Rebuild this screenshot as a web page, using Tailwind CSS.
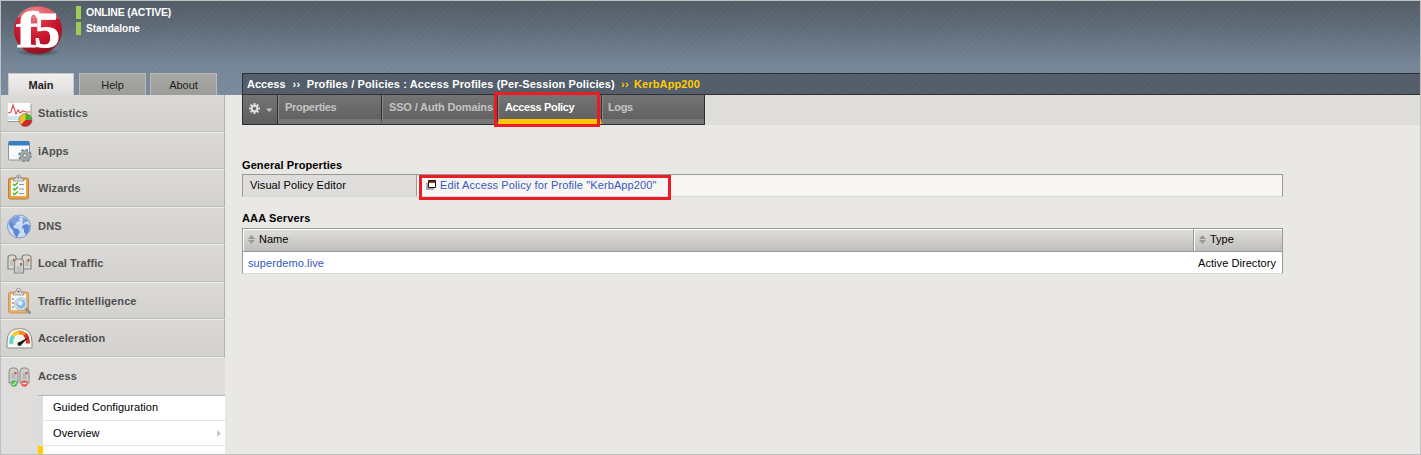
<!DOCTYPE html>
<html lang="en">
<head>
<meta charset="utf-8">
<title>Access Profiles</title>
<script src="https://cdn.jsdelivr.net/npm/@tailwindcss/browser@4"></script>
</head>
<body class="w-[1421px] h-[455px] overflow-hidden bg-[#e9e8e4] font-['Liberation_Sans',Arial,sans-serif] text-[11px] leading-[13px] text-black">
<div class="relative flex h-[455px] w-[1421px] flex-col border border-[#bfbfc1] overflow-hidden">
  <header class="flex h-[94px] shrink-0 bg-[repeating-linear-gradient(135deg,#ffffff06_0px,#ffffff06_2px,transparent_2px,transparent_4px),linear-gradient(to_bottom,#515c66_0px,#5a6672_20px,#748496_62px,#7a8a9c_94px)]">
    <div class="flex w-[241px] shrink-0 flex-col justify-between">
      <div class="flex">
        <svg class="ml-[9px] mt-[1px] h-[56px] w-[58px] shrink-0" viewBox="0 0 58 56">
          <defs>
            <radialGradient id="ball" cx=".42" cy=".22" r=".8"><stop offset="0" stop-color="#e9818b"/><stop offset=".28" stop-color="#d9303e"/><stop offset=".65" stop-color="#c5122a"/><stop offset="1" stop-color="#8d1220"/></radialGradient>
            <radialGradient id="shade"><stop offset="0" stop-color="#20262c" stop-opacity=".75"/><stop offset="1" stop-color="#20262c" stop-opacity="0"/></radialGradient>
          </defs>
          <ellipse cx="28" cy="50" rx="22" ry="4.500" fill="url(#shade)"/>
          <circle cx="28" cy="28" r="24" fill="url(#ball)"/>
          <path d="M7 16Q13 4 28 4.500Q44 5 49 17Q28 9 7 16Z" fill="#fff" opacity=".28"/>
          <g font-family="Liberation Serif" font-weight="bold" fill="#fff" stroke="#fff" stroke-width=".8"><text x="6" y="45" font-size="51" textLength="22" lengthAdjust="spacingAndGlyphs">f</text><text x="24" y="45" font-size="50" textLength="26" lengthAdjust="spacingAndGlyphs">5</text></g>
        </svg>
        <div class="ml-[8px] mt-[5px] flex flex-col gap-[3px] font-bold text-white">
          <div class="flex h-[13px] items-center"><i class="mr-[5px] h-[13px] w-[5px] bg-[#9fcc57]"></i><span class="text-[10.5px] tracking-[-0.2px]">ONLINE (ACTIVE)</span></div>
          <div class="flex h-[13px] items-center"><i class="mr-[5px] h-[13px] w-[5px] bg-[#9fcc57]"></i><span class="text-[10px] tracking-[0px]">Standalone</span></div>
        </div>
      </div>
      <nav class="ml-[7px] flex h-[22px] text-center leading-[22px]">
        <div class="h-[22px] w-[66px] border border-b-0 border-[#c9c9c7] bg-linear-to-b from-[#f0efed] to-[#dedddb] font-bold text-[#222]">Main</div>
        <div class="ml-[5px] h-[22px] w-[67px] border border-b-0 border-[#b9bbb9] bg-linear-to-b from-[#a8a9a5] to-[#9c9d98] text-[#222]">Help</div>
        <div class="ml-[4px] h-[22px] w-[67px] border border-b-0 border-[#b9bbb9] bg-linear-to-b from-[#a8a9a5] to-[#9c9d98] text-[#222]">About</div>
      </nav>
    </div>
    <div class="mt-[72px] flex h-[22px] flex-1 items-center border-y border-l border-[#2e3036] bg-[repeating-linear-gradient(135deg,#ffffff05_0px,#ffffff05_2px,transparent_2px,transparent_4px),linear-gradient(#525d69,#525d69)] pl-[4px] font-bold text-white">
      <span>Access</span><span class="ml-[7px] tracking-[.4px]">››</span><span class="ml-[6px] tracking-[.12px]">Profiles / Policies : Access Profiles (Per-Session Policies)</span><span class="ml-[6px] tracking-[.4px] text-[#ffcc00]">››</span><span class="ml-[5px] tracking-[.12px] text-[#ffcc00]">KerbApp200</span>
    </div>
  </header>

  <div class="flex min-h-0 flex-1">
    <aside class="flex w-[224px] shrink-0 flex-col bg-[#dedddb] font-bold text-[#505050]">
      <div class="flex h-[38px] shrink-0 items-center border-b border-r border-b-[#f0efed] border-r-[#b0b0b0] bg-linear-to-b from-[#dcdad7] to-[#d2d1cd] pl-[5px] shadow-[inset_0_-1px_0_#bebebb]">
        <svg class="mr-[5px] h-[28px] w-[27px]" viewBox="0 0 27 28"><rect x="1.500" y="4" width="24" height="18" rx="1" fill="#9b9b9b"/><rect x="1.500" y="3" width="23" height="18" rx="1" fill="#fbfbfb"/><path d="M2 16h22v4H2z" fill="#cfe2ee"/><path d="M2 13l3-1 2-7 3 9 2-4 2 3 3-2 3 1h4" fill="none" stroke="#d3545e" stroke-width="1.200"/><circle cx="19.500" cy="20" r="6.500" fill="#edc226"/><path d="M19.500 20v-6.500a6.500 6.500 0 0 1 6.500 6.500z" fill="#4ab02f"/><path d="M19.500 20H26a6.500 6.500 0 0 1-11 4.700z" fill="#cf2437"/><circle cx="19.500" cy="20" r="6.500" fill="none" stroke="#7b6b3b" stroke-width=".6"/></svg><span class="tracking-[.1px]">Statistics</span>
      </div>
      <div class="flex h-[37px] shrink-0 items-center border-b border-r border-b-[#f0efed] border-r-[#b0b0b0] bg-linear-to-b from-[#dcdad7] to-[#d2d1cd] pl-[5px] shadow-[inset_0_-1px_0_#bebebb]">
        <svg class="mr-[5px] h-[28px] w-[27px]" viewBox="0 0 27 28"><rect x="2.500" y="5" width="21" height="18" rx="1" fill="#f8fafc" stroke="#929292"/><rect x="2.500" y="4" width="21" height="4.500" rx="1" fill="#3c7fc0"/><circle cx="19" cy="18.500" r="5.300" fill="none" stroke="#7d8789" stroke-width="3" stroke-dasharray="2.200 1.963"/><circle cx="19" cy="18.500" r="5" fill="#a3acae" stroke="#859092" stroke-width=".7"/><circle cx="19" cy="18.500" r="2" fill="#d9dcda" stroke="#758083"/></svg><span class="tracking-[0px]">iApps</span>
      </div>
      <div class="flex h-[38px] shrink-0 items-center border-b border-r border-b-[#f0efed] border-r-[#b0b0b0] bg-linear-to-b from-[#dcdad7] to-[#d2d1cd] pl-[5px] shadow-[inset_0_-1px_0_#bebebb]">
        <svg class="mr-[5px] mb-[3px] h-[28px] w-[27px]" viewBox="0 0 27 28"><rect x="2.500" y="5" width="20" height="21" rx="2" fill="#eaa244" stroke="#b97c35"/><path d="M5 7h15v16H5z" fill="#f8f8f6"/><path d="M7 8q0-3 3-3 0-3 2.500-3T15 5q3 0 3 3z" fill="#d8d8d4" stroke="#858585" stroke-width=".7"/><circle cx="12.500" cy="4.500" r="1" fill="#666"/><path d="M7 11l1.500 1.500L12 9.500M7 15.500L8.500 17 12 14M7 20l1.500 1.500L12 18.500" fill="none" stroke="#55b536" stroke-width="1.600"/><path d="M13 11.500h5M13 16h5M13 20.500h5" stroke="#8a96ae"/></svg><span class="tracking-[.1px]">Wizards</span>
      </div>
      <div class="flex h-[37px] shrink-0 items-center border-b border-r border-b-[#f0efed] border-r-[#b0b0b0] bg-linear-to-b from-[#dcdad7] to-[#d2d1cd] pl-[5px] shadow-[inset_0_-1px_0_#bebebb]">
        <svg class="mr-[5px] h-[28px] w-[27px]" viewBox="0 0 27 28"><circle cx="13" cy="14.500" r="11.500" fill="#c9daf5" stroke="#8299c0"/><path d="M4 8Q7 4 12 4l3 1-2 2 1 2-3 1-2 3-2 1 1 2 4 1 2 3-2 3-1 3-3-4-1-4-3-3-1-3zM16 5q4 1 6 4l-3 1-2 2-1-2 1-2zM17 13l4-1 3 2-1 5-3 4-2-3 0-3-2-1z" fill="#5d88d4"/><ellipse cx="12" cy="8" rx="8" ry="4.500" fill="#fff" opacity=".2"/></svg><span class="tracking-[.2px]">DNS</span>
      </div>
      <div class="flex h-[38px] shrink-0 items-center border-b border-r border-b-[#f0efed] border-r-[#b0b0b0] bg-linear-to-b from-[#dcdad7] to-[#d2d1cd] pl-[5px] shadow-[inset_0_-1px_0_#bebebb]">
        <svg class="mr-[5px] mb-[1px] h-[28px] w-[27px]" viewBox="0 0 27 28"><g fill="#d9d9d6" stroke="#858583" stroke-width="1.200"><path d="M2 20V9q0-3 3-3h2q3 0 3 3v11z"/><path d="M16 20V9q0-3 3-3h3q3 0 3 3v11z"/><path d="M8.500 24V13q0-3 3-3h3q3 0 3 3v11z"/></g><path d="M4 12h3M4 14h3M4 16h3M19 12h4M19 14h4M19 16h4M10.500 18h5M10.500 20h5M10.500 22h5" stroke="#a7a7a5"/><path d="M7 10h2v2H7zM14 14h2v2h-2zM21.500 10h2v2h-2z" fill="#e14242"/><path d="M7 12h2v1H7zM14 16h2v1h-2zM21.500 12h2v1h-2z" fill="#76c455"/></svg><span class="tracking-[.05px]">Local Traffic</span>
      </div>
      <div class="flex h-[37px] shrink-0 items-center border-b border-r border-b-[#f0efed] border-r-[#b0b0b0] bg-linear-to-b from-[#dcdad7] to-[#d2d1cd] pl-[5px] shadow-[inset_0_-1px_0_#bebebb]">
        <svg class="mr-[5px] mb-[1px] h-[28px] w-[27px]" viewBox="0 0 27 28"><rect x="2.500" y="5" width="20" height="21" rx="2" fill="#eaaf66" stroke="#c7985c"/><path d="M5 7h15v16H5z" fill="#f8f8f6"/><path d="M7 8q0-3 3-3 0-4 2.500-4T15 5q3 0 3 3z" fill="#d8d8d4" stroke="#858585" stroke-width=".7"/><circle cx="12.500" cy="4.500" r="1" fill="#666"/><path d="M6 12h2M6 16h2M6 20h2" stroke="#8795b4" stroke-width="1.500"/><path d="M19.500 21.500l4 4" stroke="#909090" stroke-width="3" stroke-linecap="round"/><circle cx="15" cy="17" r="5.500" fill="#8fb7e3" stroke="#e4ebf2" stroke-width="1.500"/><circle cx="15" cy="17" r="6.300" fill="none" stroke="#8b9db3" stroke-width=".7"/><circle cx="14" cy="16" r="2.500" fill="#dcecfa"/></svg><span class="tracking-[.1px]">Traffic Intelligence</span>
      </div>
      <div class="flex h-[38px] shrink-0 items-center border-b border-r border-b-[#f0efed] border-r-[#b0b0b0] bg-linear-to-b from-[#dcdad7] to-[#d2d1cd] pl-[5px] shadow-[inset_0_-1px_0_#bebebb]">
        <svg class="mr-[5px] mb-[2px] h-[28px] w-[27px]" viewBox="0 0 27 28"><path d="M1 23v-5Q1 4.500 13.500 4.500T26 18v5q0 1-1 1H2q-1 0-1-1z" fill="#f5f5f3" stroke="#8b8b89"/><g fill="none" stroke-width="4"><path d="M5.500 20q-1-5 2-8" stroke="#65d5d2"/><path d="M7 12q2-3 5.500-3.500" stroke="#ecd136"/><path d="M12.500 8.500q4-.5 7 2.500" stroke="#ee8e29"/><path d="M19 10.500q3 3 3 9" stroke="#d93422"/></g><path d="M12 19l11-6-8 8z" fill="#151515"/><circle cx="13.500" cy="20" r="2" fill="#151515"/></svg><span class="tracking-[.1px]">Acceleration</span>
      </div>
      <div class="flex h-[37px] shrink-0 items-center bg-[#dedddb] pl-[5px]">
        <svg class="mr-[5px] h-[28px] w-[27px]" viewBox="0 0 27 28"><g fill="#cececb" stroke="#8b8b89"><path d="M3 20V9q0-4 3-4h3q3 0 3 4v11z"/><path d="M14 20V9q0-4 3-4h3q3 0 3 4v11z"/></g><path d="M5.500 11h4M5.500 13h4M5.500 15h4M16.500 11h4M16.500 13h4M16.500 15h4" stroke="#a2a2a0"/><path d="M8.500 9h2v2h-2zM19.500 9h2v2h-2z" fill="#dd4242"/><circle cx="8" cy="20.500" r="3.300" fill="#5fb857"/><path d="M6 20.500l1.500 1.500L10 19" fill="none" stroke="#fff"/><circle cx="18.500" cy="20.500" r="3.300" fill="#e65f5a"/><path d="M16.500 20.500h4" stroke="#fff" stroke-width="1.200"/></svg><span class="tracking-[.05px]">Access</span>
      </div>
      <div class="ml-[37px] flex flex-col border-t border-[#b3b3b8] font-normal text-black">
        <div class="flex h-[25px] items-center border-b border-l-[5px] border-b-[#e4e4e4] border-l-[#dddcda] bg-white pb-[2px] pl-[10px] tracking-[.06px]">Guided Configuration</div>
        <div class="flex h-[25px] items-center justify-between border-b border-l-[5px] border-b-[#e4e4e4] border-l-[#dddcda] bg-white pl-[10px] pr-[4px] tracking-[.1px]"><span>Overview</span><svg class="h-[7px] w-[4px]" viewBox="0 0 4 7"><path d="M0 0l4 3.500L0 7z" fill="#c8c8c8"/></svg></div>
        <div class="h-[20px] border-l-[5px] border-[#ffcc00] bg-white"></div>
      </div>
    </aside>

    <main class="flex flex-1 flex-col pl-[17px]">
      <div class="flex h-[30px] bg-[#deddd9]">
        <div class="flex h-[30px] w-[463px] border border-t-0 border-[#2f2f33] bg-linear-to-b from-[#747474] to-[#5e5e5e] font-bold text-[#c4c4c4]">
          <div class="flex w-[35px] pl-[6px] pt-[8px] shadow-[inset_-1px_0_0_#2f2f33]">
            <svg class="h-[12px] w-[24px]" viewBox="0 0 24 12"><g stroke="#dedede" stroke-width="2"><path d="M5.500 0v11M0 5.500h11M1.600 1.600l7.800 7.800M9.400 1.600L1.600 9.400"/></g><circle cx="5.500" cy="5.500" r="3.700" fill="#dedede"/><circle cx="5.500" cy="5.500" r="1.800" fill="#686868"/><path d="M17 5.500h6.500l-3.250 3.500z" fill="#c4c4c4"/></svg>
          </div>
          <div class="w-[104px] border-b-[5px] border-l border-r border-b-[#777] border-l-[#8a8a8a] border-r-[#2f2f33] pl-[6px] pt-[6px] tracking-[-.3px]">Properties</div>
          <div class="w-[116px] whitespace-nowrap border-b-[5px] border-l border-r border-b-[#777] border-l-[#8a8a8a] border-r-[#2f2f33] pl-[6px] pt-[6px] tracking-[-.15px]">SSO / Auth Domains</div>
          <div class="w-[104px] border-b-[5px] border-l border-r border-b-[#ffc500] border-l-[#8a8a8a] border-r-[#2f2f33] pl-[6px] pt-[6px] tracking-[-.36px] text-white">Access Policy</div>
          <div class="flex-1 border-b-[5px] border-l border-b-[#777] border-l-[#8a8a8a] pl-[5px] pt-[6px] tracking-[-.4px]">Logs</div>
        </div>
      </div>
      <h2 class="mt-[34px] font-bold tracking-[.1px]">General Properties</h2>
      <div class="mt-[2px] flex h-[23px] w-[1041px] border border-[#999] border-b-[#d8d8d8] bg-[#f7f6f4] leading-[20px]">
        <div class="w-[174px] border-r border-[#999] bg-[#dedddb] pl-[7px] tracking-[.1px]">Visual Policy Editor</div>
        <div class="flex pl-[9px]">
          <svg class="mt-[5px] h-[10px] w-[10px]" viewBox="0 0 10 10"><path d="M0 3h8v7H0z" fill="#aaa"/><path d="M2.500.5h7v7h-7z" fill="#fff" stroke="#111"/><path d="M3 1h6v2H3z" fill="#8a3426"/></svg>
          <a class="ml-[4px] text-[#3558c0] tracking-[.12px]">Edit Access Policy for Profile "KerbApp200"</a>
        </div>
      </div>
      <h2 class="mt-[15px] font-bold tracking-[.15px]">AAA Servers</h2>
      <div class="mt-[3px] w-[1041px] border border-[#999] border-b-[#d8d8d8] bg-white">
        <div class="flex h-[23px] border-b border-[#999]">
          <div class="flex w-[951px] items-center border-l border-t border-r border-l-white border-t-white border-r-[#999] bg-linear-to-b from-[#dfdeda] to-[#bfbeba] pb-[2px] pl-[4px]"><svg class="mr-[4px] h-[9px] w-[7px]" viewBox="0 0 7 9"><path d="M0 4l3.500-4L7 4zM0 5h7L3.500 9z" fill="#999"/></svg>Name</div>
          <div class="flex flex-1 items-center border-l border-t border-white bg-linear-to-b from-[#dfdeda] to-[#bfbeba] pb-[2px] pl-[4px]"><svg class="mr-[4px] h-[9px] w-[7px]" viewBox="0 0 7 9"><path d="M0 4l3.500-4L7 4zM0 5h7L3.500 9z" fill="#999"/></svg>Type</div>
        </div>
        <div class="flex h-[21px] items-center pt-[2px]"><a class="w-[950px] pl-[5px] text-[#3558c0] tracking-[.1px]">superdemo.live</a><span class="pl-[5px] tracking-[.06px]">Active Directory</span></div>
      </div>
    </main>
  </div>
  <div class="absolute left-[493px] top-[91px] h-[35px] w-[106px] border-[3px] border-[#ed1c24]"></div>
  <div class="absolute left-[418px] top-[174px] h-[25px] w-[252px] border-[3px] border-[#ed1c24]"></div>
</div>
</body>
</html>
